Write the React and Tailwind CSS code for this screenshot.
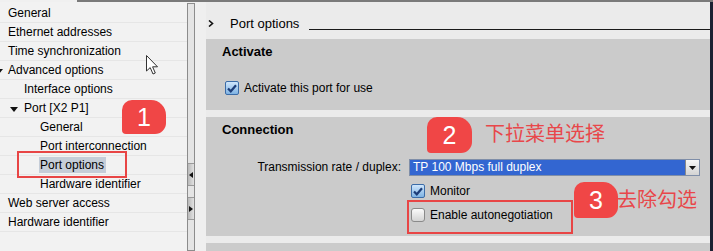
import React from "react";

const navRows = [
  { label: "General", indent: 8 },
  { label: "Ethernet addresses", indent: 8 },
  { label: "Time synchronization", indent: 8 },
  { label: "Advanced options", indent: 8, arrow: -5 },
  { label: "Interface options", indent: 24 },
  { label: "Port [X2 P1]", indent: 24, arrow: 10 },
  { label: "General", indent: 40 },
  { label: "Port interconnection", indent: 40 },
  { label: "Port options", indent: 40, selected: true },
  { label: "Hardware identifier", indent: 40 },
  { label: "Web server access", indent: 8 },
  { label: "Hardware identifier", indent: 8 },
];

function Arrow({ left }) {
  return (
    <svg
      className="absolute top-[8px]"
      style={{ left }}
      width="8"
      height="5"
      viewBox="0 0 8 5"
    >
      <path d="M0 0 L8 0 L4 5 Z" fill="#111" />
    </svg>
  );
}

function Checkbox({ checked }) {
  if (checked) {
    return (
      <div className="w-[14px] h-[14px] rounded-[2px] border border-[#3b6ca8] bg-gradient-to-b from-[#cfe6fc] to-[#7fb3e3] flex items-center justify-center shrink-0">
        <svg width="10" height="9" viewBox="0 0 10 9">
          <path
            d="M1 4.5 L3.8 7.3 L9 1.3"
            fill="none"
            stroke="#1d3d78"
            strokeWidth="2.2"
          />
        </svg>
      </div>
    );
  }
  return (
    <div className="w-[14px] h-[14px] rounded-[3px] border border-[#8a8a8a] bg-gradient-to-b from-[#fbfbfb] to-[#d4d4d4] shrink-0" />
  );
}

function Badge({ n, className }) {
  return (
    <div
      className={`absolute bg-[#f04646] text-white text-[25px] leading-none flex items-center justify-center rounded-tl-[10px] rounded-tr-[15px] rounded-br-[11px] rounded-bl-[4px] ${className}`}
    >
      {n}
    </div>
  );
}

export default function App() {
  return (
    <div className="relative w-[713px] h-[251px] overflow-hidden bg-[#f0f0f0] flex flex-col text-[12px] text-black font-['Liberation_Sans',Arial,sans-serif]">
      {/* top edge */}
      <div className="flex h-[2px] shrink-0">
        <div className="w-[77px] bg-[#f0f0f0]" />
        <div className="flex-1 bg-[#7a7a7a]" />
      </div>

      <div className="flex flex-1 min-h-0">
        {/* project tree */}
        <div className="w-[187px] shrink-0 pt-[2px] flex flex-col bg-[#f2f2f2]">
          {navRows.map((row, i) => (
            <div
              key={i}
              className="relative h-[19px] shrink-0 border-b border-[#e6e6e6] flex items-center"
              style={{ paddingLeft: row.indent }}
            >
              {row.arrow !== undefined && <Arrow left={row.arrow} />}
              <span
                className={`leading-[16px] ${
                  row.selected ? "bg-[#c5cdd8] pl-[1px] pr-[2px] -ml-[1px]" : ""
                }`}
              >
                {row.label}
              </span>
            </div>
          ))}
        </div>

        {/* scrollbar */}
        <div className="w-[8px] shrink-0 mt-[1px] border border-[#8c8c8c] bg-[#e4e4e4] flex flex-col">
          <div className="h-[159px] shrink-0" />
          <div className="h-[23px] shrink-0 bg-gradient-to-r from-[#b9b9b9] to-[#e2e2e2] border-y border-[#9a9a9a] flex items-center">
            <svg width="4" height="6" viewBox="0 0 4 6" className="ml-[1px]">
              <path d="M4 0 L4 6 L0 3 Z" fill="#111" />
            </svg>
          </div>
          <div className="h-[11px] shrink-0" />
          <div className="h-[23px] shrink-0 bg-gradient-to-r from-[#b9b9b9] to-[#e2e2e2] border-y border-[#9a9a9a] flex items-center">
            <svg width="4" height="6" viewBox="0 0 4 6" className="ml-[1px]">
              <path d="M0 0 L4 3 L0 6 Z" fill="#111" />
            </svg>
          </div>
        </div>

        <div className="w-[11px] shrink-0 bg-[#efefef]" />

        {/* inspector content */}
        <div className="flex-1 min-w-0 flex flex-col bg-[#ebebeb]">
          <div className="h-[37px] shrink-0 flex items-end pb-[9px]">
            <svg width="6" height="7" viewBox="0 0 6 7" className="ml-[2px] mb-[3px]">
              <path d="M1 0.5 L4.5 3.5 L1 6.5" fill="none" stroke="#111" strokeWidth="1.6" />
            </svg>
            <span className="ml-[16px] text-[13px] leading-[13px]">Port options</span>
            <div className="flex-1 h-[1px] bg-[#1a1a1a] ml-[10px]" />
          </div>

          <div className="h-[71px] shrink-0 bg-[#cbcbcb] flex flex-col pt-[6px]">
            <div className="pl-[16px] font-bold text-[13px] leading-[14px]">Activate</div>
            <div className="mt-[22px] pl-[19px] flex items-center gap-[5px]">
              <Checkbox checked />
              <span className="leading-[14px]">Activate this port for use</span>
            </div>
          </div>

          <div className="h-[7px] shrink-0" />

          <div className="h-[119px] shrink-0 bg-[#cbcbcb] flex flex-col pt-[6px]">
            <div className="pl-[16px] font-bold text-[13px] leading-[14px]">Connection</div>
            <div className="mt-[22px] flex items-center">
              <div className="w-[195px] text-right leading-[17px]">Transmission rate / duplex:</div>
              <div className="ml-[8px] w-[291px] h-[17px] flex border border-[#7f8ea8]">
                <div className="flex-1 bg-[#3366d1] text-white leading-[15px] pl-[3px]">
                  TP 100 Mbps full duplex
                </div>
                <div className="w-[14px] bg-gradient-to-b from-[#f7f7f7] to-[#d3d3d3] border-l border-[#8a8a8a] flex items-center justify-center">
                  <svg width="7" height="4" viewBox="0 0 7 4">
                    <path d="M0 0 L7 0 L3.5 4 Z" fill="#111" />
                  </svg>
                </div>
              </div>
            </div>
            <div className="mt-[8px] pl-[205px] flex items-center gap-[5px]">
              <Checkbox checked />
              <span className="leading-[14px]">Monitor</span>
            </div>
            <div className="mt-[10px] pl-[205px] flex items-center gap-[5px]">
              <Checkbox />
              <span className="leading-[14px]">Enable autonegotiation</span>
            </div>
          </div>

          <div className="h-[7px] shrink-0" />
          <div className="flex-1 bg-[#cbcbcb]" />
        </div>

        <div className="w-[3px] shrink-0 bg-[#1b2132]" />
      </div>

      {/* annotations */}
      <div className="absolute left-[17px] top-[151px] w-[110px] h-[27px] border-2 border-[#e84545]" />
      <div className="absolute left-[407px] top-[200px] w-[166px] h-[34px] border-2 border-[#e84545]" />

      <Badge n="1" className="left-[122px] top-[100px] w-[44px] h-[34px]" />
      <Badge n="2" className="left-[427px] top-[117px] w-[45px] h-[36px]" />
      <Badge n="3" className="left-[574px] top-[182px] w-[44px] h-[36px]" />

      <div className="absolute left-[485px] top-[121px] text-[20px] leading-[24px] text-[#e8474a] font-['Noto_Sans_CJK_SC',sans-serif]">
        下拉菜单选择
      </div>
      <div className="absolute left-[617px] top-[187px] text-[20px] leading-[24px] text-[#e8474a] font-['Noto_Sans_CJK_SC',sans-serif]">
        去除勾选
      </div>

      {/* mouse pointer */}
      <svg
        className="absolute left-[146px] top-[55px]"
        width="13"
        height="21"
        viewBox="0 0 13 21"
      >
        <path
          d="M0.5 0.5 L0.5 16 L4.2 12.6 L7 19 L9.3 18 L6.6 11.8 L11.5 11.8 Z"
          fill="#fff"
          stroke="#333"
          strokeWidth="1"
          strokeLinejoin="round"
        />
      </svg>
    </div>
  );
}
